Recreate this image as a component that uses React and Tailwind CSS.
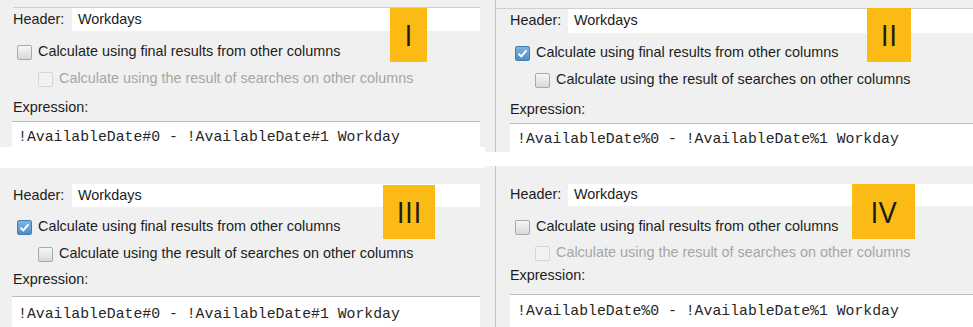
import React from 'react';

const ui = "font-['Liberation_Sans',Arial,sans-serif] text-[14.4px]";
const mono = "font-['Liberation_Mono','Courier_New',monospace] text-[14.8px]";

function Box({ checked, disabled }) {
  if (checked) {
    return (
      <span className="w-[15px] h-[15px] shrink-0 rounded-[2px] border border-[#3f7fb3] bg-gradient-to-b from-[#7fb4e0] to-[#4a8fc8] flex items-center justify-center">
        <svg width="11" height="11" viewBox="0 0 11 11">
          <path d="M1.5 5.8 L4.3 8.4 L9.5 2.3" fill="none" stroke="#fff" strokeWidth="2" />
        </svg>
      </span>
    );
  }
  if (disabled) {
    return <span className="w-[15px] h-[15px] shrink-0 rounded-[2px] border border-[#d6d6d6] bg-[#f2f2f2]" />;
  }
  return <span className="w-[15px] h-[15px] shrink-0 rounded-[2px] border border-[#a9a9a9] bg-gradient-to-b from-[#f6f6f6] to-[#d9d9d9]" />;
}

function Badge({ className, children }) {
  return (
    <div className={`absolute bg-[#fbbb14] flex items-center justify-center text-[#1b1b1b] text-[30px] leading-none font-['Open_Sans',sans-serif] ${className}`}>
      {children}
    </div>
  );
}

function Fields({ checked, hash, s }) {
  return (
    <>
      <div className={`flex items-center ${s.header}`}>
        <span className={`${s.labelW} text-[#1c1c1c]`}>Header:</span>
        <div className="flex-1 h-full bg-white pl-[6px] flex items-center text-[#1c1c1c]">Workdays</div>
      </div>
      <div className={`flex items-center h-[20px] gap-[6px] ${s.cb1}`}>
        <Box checked={checked} />
        <span className="text-[#1c1c1c]">Calculate using final results from other columns</span>
      </div>
      <div className={`flex items-center h-[20px] gap-[6px] pl-[25px] ${s.cb2}`}>
        <Box disabled={!checked} />
        <span className={checked ? 'text-[#1c1c1c]' : 'text-[#a6a6a6]'}>
          Calculate using the result of searches on other columns
        </span>
      </div>
      <div className={`h-[18px] flex items-center text-[#1c1c1c] ${s.expr}`}>Expression:</div>
      <div className={`border-t border-[#bdbdbd] bg-white ${s.box}`}>
        <div className={`${mono} leading-[20px] text-[#262626] whitespace-nowrap ${s.boxText}`}>
          !AvailableDate{hash}0 - !AvailableDate{hash}1 Workday
        </div>
      </div>
    </>
  );
}

export default function App() {
  return (
    <div className={`w-[973px] h-[327px] bg-white overflow-hidden grid grid-cols-[485px_488px] grid-rows-[160px_167px] ${ui}`}>
      {/* I */}
      <div className="relative bg-white">
        <div className="h-[147px] bg-[#f0f0f0] pt-[7px] pl-[13px] pr-[5px] flex flex-col">
          <div className="h-px bg-[#cfcfcf]" />
          <Fields
            checked={false}
            hash="#"
            s={{ header: 'h-[23px]', labelW: 'w-[59px]', cb1: 'mt-[11px] pl-[4px]', cb2: 'mt-[7px]', expr: 'mt-[10px]', box: 'mt-[4px] h-[26px] -ml-[1px]', boxText: 'pt-[5px] pl-[6px]' }}
          />
        </div>
        <Badge className="left-[390px] top-[8px] w-[37px] h-[54px]">I</Badge>
      </div>

      {/* II */}
      <div className="relative bg-white">
        <div className="h-[152px] bg-[#f0f0f0] pl-[10px] flex">
          <div className="flex-1 border-l border-[#c4c4c4] pt-[8px] flex flex-col">
            <div className="h-px bg-[#cfcfcf]" />
            <div className="pl-[14px] flex flex-col">
              <Fields
                checked={true}
                hash="%"
                s={{ header: 'h-[24px]', labelW: 'w-[58px]', cb1: 'mt-[10px] pl-[5px]', cb2: 'mt-[7px]', expr: 'mt-[11px]', box: 'mt-[4px] h-[29px]', boxText: 'pt-[5px] pl-[7px]' }}
              />
            </div>
          </div>
        </div>
        <Badge className="left-[382px] top-[8px] w-[44px] h-[54px]">II</Badge>
      </div>

      {/* III */}
      <div className="relative bg-white pt-[8px]">
        <div className="h-[159px] bg-[#f0f0f0] pt-[2px] pl-[13px] pr-[5px] flex flex-col">
          <div className="h-px bg-[#cfcfcf]" />
          <div className="mt-[14px] flex flex-col">
            <Fields
              checked={true}
              hash="#"
              s={{ header: 'h-[23px]', labelW: 'w-[59px]', cb1: 'mt-[10px] pl-[4px]', cb2: 'mt-[7px]', expr: 'mt-[7px]', box: 'mt-[7px] h-[40px] -ml-[1px]', boxText: 'pt-[7px] pl-[6px]' }}
            />
          </div>
        </div>
        <Badge className="left-[383px] top-[25px] w-[52px] h-[54px]">III</Badge>
      </div>

      {/* IV */}
      <div className="relative bg-white pt-[6px]">
        <div className="h-[161px] bg-[#f0f0f0] pl-[10px] flex">
          <div className="flex-1 border-l border-[#c4c4c4] pt-[16px] flex flex-col">
            <div className="h-px bg-[#cfcfcf]" />
            <div className="pl-[14px] mt-[2px] flex flex-col">
              <Fields
                checked={false}
                hash="%"
                s={{ header: 'h-[22px]', labelW: 'w-[58px]', cb1: 'mt-[11px] pl-[5px]', cb2: 'mt-[6px]', expr: 'mt-[4px]', box: 'mt-[9px] h-[40px]', boxText: 'pt-[6px] pl-[7px]' }}
              />
            </div>
          </div>
        </div>
        <Badge className="left-[367px] top-[24px] w-[63px] h-[55px]">IV</Badge>
      </div>
    </div>
  );
}
